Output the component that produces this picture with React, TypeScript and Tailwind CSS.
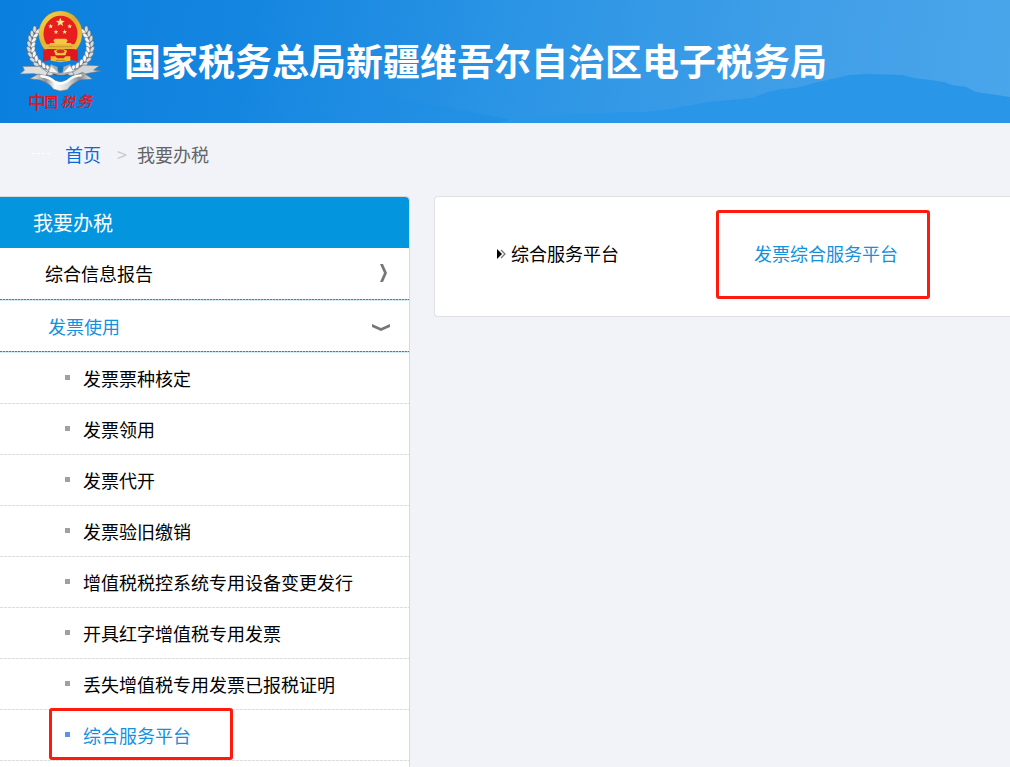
const subItems = [
  "发票票种核定",
  "发票领用",
  "发票代开",
  "发票验旧缴销",
  "增值税税控系统专用设备变更发行",
  "开具红字增值税专用发票",
  "丢失增值税专用发票已报税证明",
  "综合服务平台",
]

const activeItem = "综合服务平台"

// x, y, rotation of the silver wheat grains, left side only
const grains = [
  [111, 88, 25],
  [103, 101, 20],
  [97, 115, 12],
  [94, 130, 4],
  [93, 145, -6],
  [96, 160, -16],
  [102, 174, -28],
  [112, 187, -38],
  [124, 198, -48],
  [137, 206, -58],
  [150, 214, -64],
]

function WheatBranch() {
  return (
    <g>
      <path d="M110 84 C84 122 84 176 122 200 L172 222" fill="none" stroke="#4d5b69" strokeWidth="13" />
      {grains.map(([x, y, r], i) => (
        <g key={i} transform={`translate(${x} ${y}) rotate(${r})`}>
          <ellipse cx="-7" cy="0" rx="5.5" ry="10" fill="#d9dcde" stroke="#59636c" strokeWidth="1.5" transform="rotate(-24)" />
          <ellipse cx="7" cy="2" rx="5.5" ry="10" fill="#f7f7f7" stroke="#6a737b" strokeWidth="1.5" transform="rotate(24)" />
        </g>
      ))}
    </g>
  )
}

function Star({ x, y, s }: { x: number; y: number; s: number }) {
  return (
    <path
      transform={`translate(${x} ${y}) scale(${s})`}
      d="M0 -10 L2.6 -3.4 L9.5 -3.1 L4.1 1.3 L5.9 8.1 L0 4.3 L-5.9 8.1 L-4.1 1.3 L-9.5 -3.1 L-2.6 -3.4Z"
      fill="#ffe98a"
    />
  )
}

function Emblem() {
  return (
    <svg viewBox="57 30 246 312" className="h-[104px] w-[82px] shrink-0" role="img" aria-label="中国税务">
      <defs>
        <linearGradient id="gold" x1="0" y1="0" x2="1" y2="1">
          <stop offset="0" stopColor="#f7d64c" />
          <stop offset="0.5" stopColor="#dca92a" />
          <stop offset="1" stopColor="#f3cc3e" />
        </linearGradient>
        <linearGradient id="silver" x1="0" y1="0" x2="1" y2="0">
          <stop offset="0" stopColor="#f5f5f4" />
          <stop offset="0.25" stopColor="#8f9295" />
          <stop offset="0.4" stopColor="#fbfbfb" />
          <stop offset="0.62" stopColor="#d5d6d7" />
          <stop offset="0.8" stopColor="#85898c" />
          <stop offset="1" stopColor="#eeeeee" />
        </linearGradient>
      </defs>
      <WheatBranch />
      <g transform="translate(363 0) scale(-1 1)">
        <WheatBranch />
      </g>
      {/* ribbon */}
      <path d="M59 222 L73 211 L68 199 L118 199 L143 217 L137 229 L102 221Z" fill="#dedfdf" stroke="#70767b" strokeWidth="2" />
      <path d="M302 213 L281 210 L298 197 L250 195 L218 217 L226 230 L265 220Z" fill="#d2d4d5" stroke="#70767b" strokeWidth="2" />
      <path d="M90 236 L115 222 L146 229 Q182 261 218 229 L248 217 L277 237 L239 240 Q210 255 202 269 L181 273 L161 268 Q148 249 120 240Z" fill="url(#silver)" stroke="#73797e" strokeWidth="2" />
      <path d="M121 228 Q150 231 165 246 Q181 257 201 244 Q219 226 245 226" fill="none" stroke="#fff" strokeWidth="7" />
      <path d="M153 193 L181 205 L210 193 L222 212 Q182 239 142 211Z" fill="#a9adb0" />
      <path d="M154 198 L174 218 L147 215Z" fill="#f4f4f4" />
      <path d="M209 198 L190 218 L219 213Z" fill="#fff" />
      <path d="M172 203 L181 197 L191 203 L187 218 L176 218Z" fill="#1872ba" />
      {/* gold rim and red field */}
      <ellipse cx="181.5" cy="101" rx="58" ry="61" fill="#e71d1e" stroke="url(#gold)" strokeWidth="14" />
      <ellipse cx="181.5" cy="101" rx="65" ry="68" fill="none" stroke="#b88a24" strokeWidth="1.5" strokeDasharray="9 5" />
      <Star x={181} y={67} s={1.4} />
      <Star x={152} y={79} s={0.75} />
      <Star x={209} y={79} s={0.75} />
      <Star x={168} y={96} s={0.75} />
      <Star x={194} y={96} s={0.75} />
      <path d="M160 121 L165 116 H198 L203 121 L199 129 H213 L216 138 H147 L150 129 H164Z" fill="#f5c844" />
      {/* drapes */}
      <path d="M130 150 L146 146 H217 L233 150 L234 184 L210 179 L181 186 L153 179 L129 184Z" fill="#e0171d" />
      <path d="M124 133 H239 L229 147 H134Z" fill="#e6b93a" />
      <path d="M146 140 H217" stroke="#b98a20" strokeWidth="2" />
      <path d="M162 152 Q181 140 201 152 L196 166 H167Z" fill="#f1cb48" />
      <ellipse cx="181.5" cy="154" rx="12" ry="6" fill="#cf321d" />
      <path d="M152 169 H166 L172 175 H191 L197 169 H211 L211 182 L181 187 L152 182Z" fill="#edbd36" />
      <path d="M168 181 H195" stroke="#b98a20" strokeWidth="3" />
      <g fill="#e0161c" fontFamily="'Noto Sans CJK SC', sans-serif" fontWeight="500">
        <text x="84" y="326" fontSize="54">中</text>
        <text x="134" y="322" fontSize="40">国</text>
        <text x="182" y="322" fontSize="42" fontStyle="italic">税</text>
        <text x="230" y="322" fontSize="46" fontStyle="italic">务</text>
      </g>
    </svg>
  )
}

function Header() {
  return (
    <header className="relative h-[123px] overflow-hidden bg-[linear-gradient(100deg,#0a7fde_0%,#1586e0_25%,#2c95e5_52%,#419fe8_80%,#4aa6eb_100%)]">
      <svg viewBox="0 0 1010 123" preserveAspectRatio="none" className="absolute inset-0 h-full w-full" aria-hidden="true">
        <defs>
          <linearGradient id="farHill" x1="0" y1="0" x2="1" y2="0">
            <stop offset="0" stopColor="#1a8ae2" stopOpacity="0" />
            <stop offset="1" stopColor="#1e8ee6" stopOpacity="0.7" />
          </linearGradient>
        </defs>
        <path d="M250 123 V84 L335 82 L400 98 L470 112 L530 123Z" fill="url(#farHill)" />
        <path
          d="M498 123 L512 119 L530 117 L550 116 L580 114 L600 113 L645 112 L662 110 L676 108 L692 105 L708 102 L730 100 L752 98 L768 92 L782 89 L796 88 L814 83 L832 79 L850 75 L865 74 L902 75 L914 78 L930 80 L944 82 L952 85 L966 87 L976 92 L990 94 L1010 97 V123Z"
          fill="#2996e8"
        />
      </svg>
      <div className="relative flex items-start pt-[10px] pl-[19px]">
        <Emblem />
        <h1 className="ml-[23px] pt-[22px] text-[37px] leading-[56px] font-bold whitespace-nowrap text-white">
          国家税务总局新疆维吾尔自治区电子税务局
        </h1>
      </div>
    </header>
  )
}

function Breadcrumb() {
  return (
    <nav className="flex h-16 items-center pb-[3px] pl-8" aria-label="当前位置">
      <span className="w-[18px] border-t border-dashed border-white"></span>
      <a href="#" className="ml-[15px] text-[#0a69d8]">首页</a>
      <span className="ml-4 text-[#c9cacc]">&gt;</span>
      <span className="ml-[10px] text-[#636465]">我要办税</span>
    </nav>
  )
}

function BlueLine() {
  return (
    <div className="h-[2px] border-b border-[#d3edf9] bg-[repeating-linear-gradient(90deg,#0a93dc_0px,#0a93dc_2px,#9fd6f3_2px,#9fd6f3_3px)] bg-clip-padding"></div>
  )
}

function Sidebar() {
  return (
    <aside className="w-[410px] shrink-0 rounded-tr border-t border-r border-[#d9dadc] bg-white">
      <h2 className="flex h-[51px] items-center rounded-tr-sm bg-[#0495df] pl-[33px] text-xl text-white">
        我要办税
      </h2>
      <button className="flex h-[51px] w-full items-center justify-between pr-[22px] pb-px pl-[45px]">
        综合信息报告
        <svg viewBox="0 0 7 18" className="h-[18px] w-[7px]" aria-hidden="true">
          <path d="M0 0 H3 L7 9 L3 18 H0 L4 9Z" fill="#777" />
        </svg>
      </button>
      <BlueLine />
      <button className="flex h-[50px] w-full items-center justify-between pr-[19px] pb-px pl-12 text-[#1391df]" aria-expanded="true">
        发票使用
        <svg viewBox="0 0 18 7" className="mt-1 h-[7px] w-[18px]" aria-hidden="true">
          <path d="M0 0 V3 L9 7 L18 3 V0 L9 4Z" fill="#777" />
        </svg>
      </button>
      <BlueLine />
      <ul>
        {subItems.map((item) => {
          const active = item === activeItem
          return (
            <li key={item} className="relative">
              <a href="#" className={`flex h-[50px] items-center gap-[13px] pb-px pl-[65px] ${active ? "text-[#1391df]" : "text-black"}`}>
                <span className={`h-[5px] w-[5px] ${active ? "bg-[#5b93e8]" : "bg-[#a0a0a0]"}`}></span>
                {item}
              </a>
              <div className="h-px bg-[repeating-linear-gradient(90deg,#dedede_0px,#dedede_3px,#f4f4f4_3px,#f4f4f4_4px)]"></div>
              {active && (
                <span className="pointer-events-none absolute -top-[2px] left-[49px] h-[52px] w-[184px] rounded-[3px] border-3 border-[#ff1a0d]"></span>
              )}
            </li>
          )
        })}
      </ul>
    </aside>
  )
}

export default function App() {
  return (
    <div className="flex min-h-screen flex-col overflow-x-hidden bg-[#f2f3f8] font-['Noto_Sans_CJK_SC',sans-serif] text-[18px] leading-6 text-black">
      <Header />
      <Breadcrumb />
      <div className="mt-[9px] flex flex-1">
        <Sidebar />
        <main className="ml-6 min-w-0 flex-1">
          <section className="flex items-center rounded-l border-y border-l border-[#dfe0e1] bg-white pt-[13px] pb-[17px] pl-[62px]">
            <h3 className="flex w-[219px] shrink-0 items-center gap-[5px] pb-1">
              <svg viewBox="0 0 9 10" className="mt-[3px] h-[10px] w-[9px]" aria-hidden="true">
                <path d="M0 0 L5 5 L0 10Z" fill="#000" />
                <path d="M4 1 L8 5 L4 9" fill="none" stroke="#777" strokeWidth="1.3" />
              </svg>
              综合服务平台
            </h3>
            <div className="relative flex h-[89px] w-[214px] items-center pb-1 pl-[38px]">
              <a href="#" className="whitespace-nowrap text-[#1391df]">发票综合服务平台</a>
              <span className="pointer-events-none absolute inset-0 rounded-[3px] border-3 border-[#ff1a0d]"></span>
            </div>
          </section>
        </main>
      </div>
    </div>
  )
}
